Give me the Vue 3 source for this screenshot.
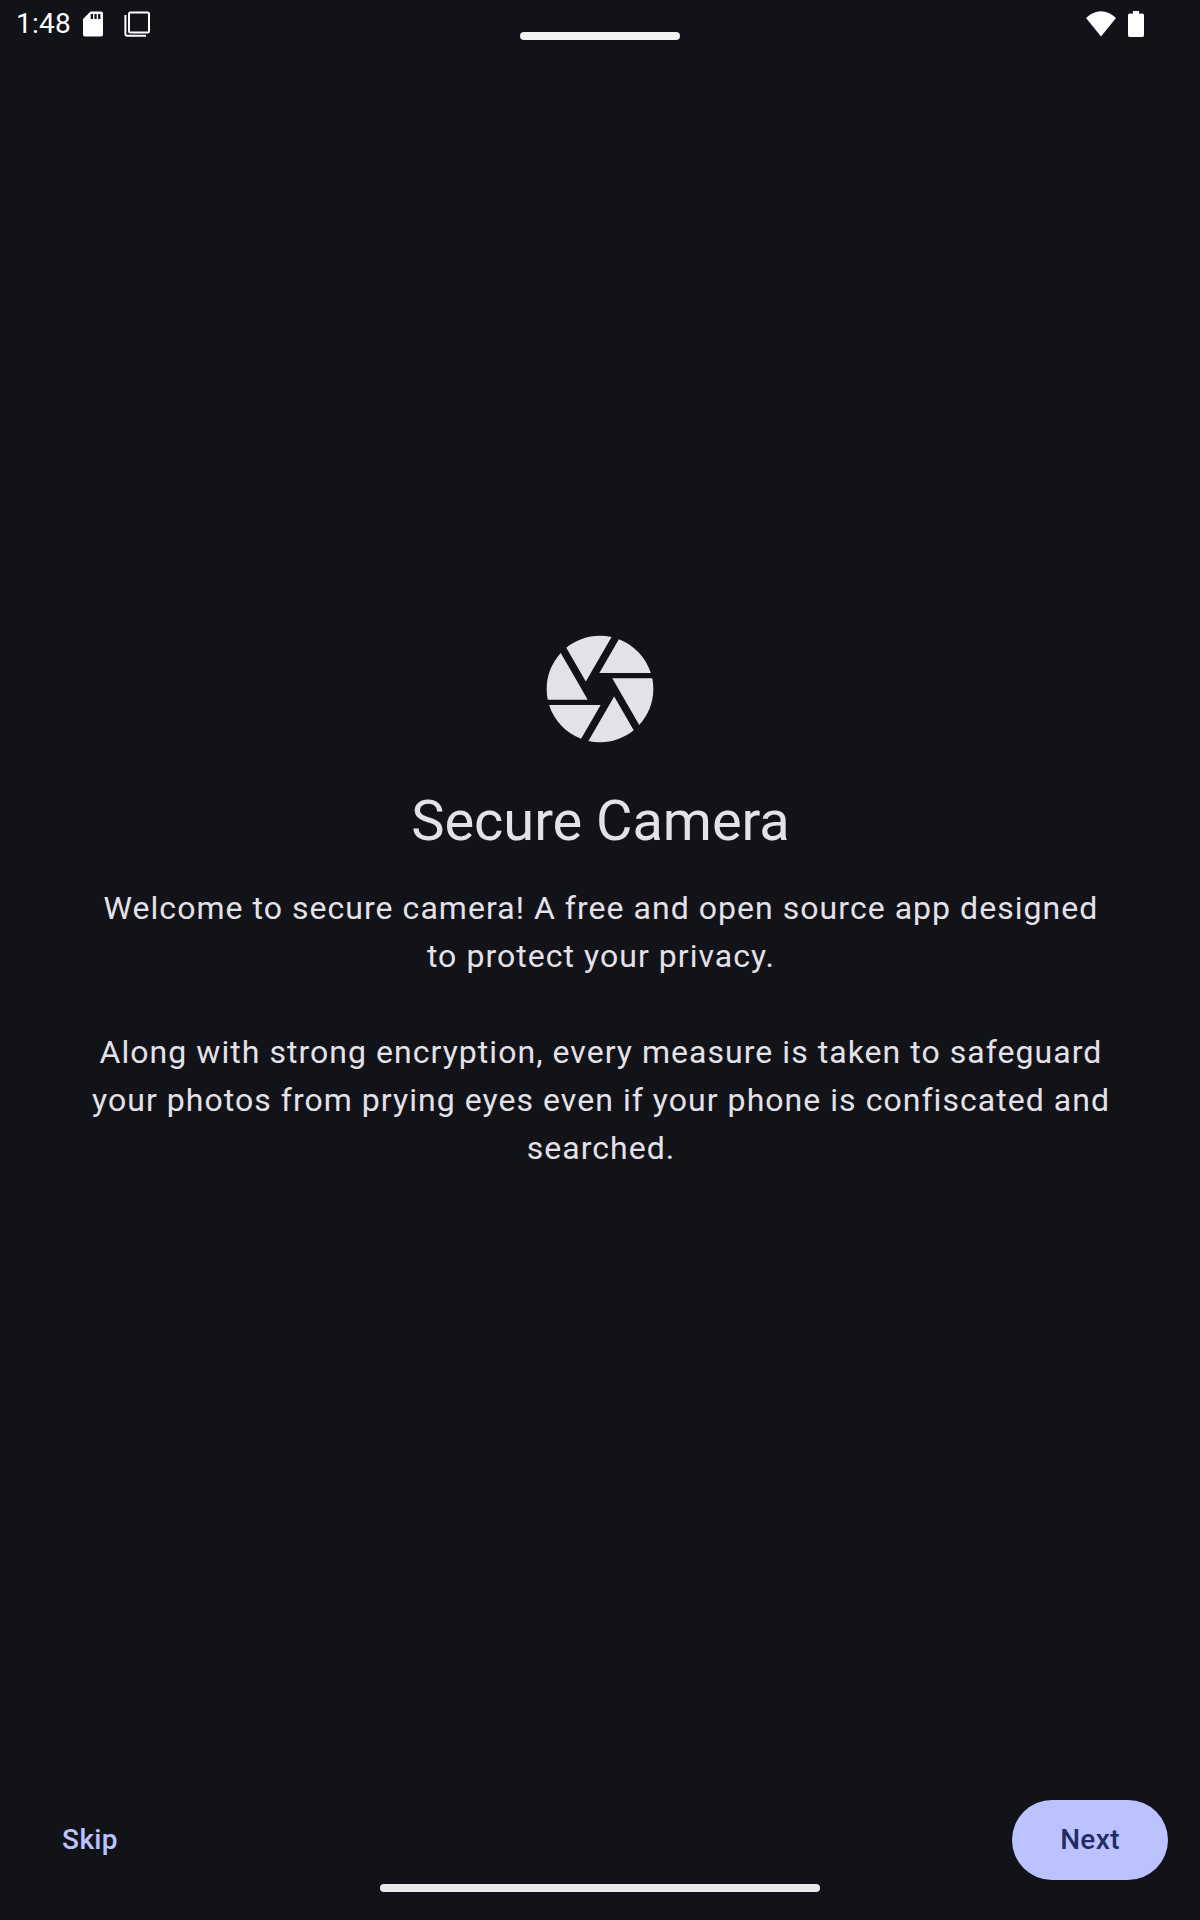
<script setup>
const intro = 'Welcome to secure camera! A free and open source app designed to protect your privacy.'
const details = 'Along with strong encryption, every measure is taken to safeguard your photos from prying eyes even if your phone is confiscated and searched.'
</script>

<template>
  <div class="screen">
    <header class="status">
      <span class="time">1:48</span>
      <svg class="sd" width="20" height="26" viewBox="0 0 20 26"><path fill="#fff" fill-rule="evenodd" d="M7.5 .5H18Q20 .5 20 2.5V23.5Q20 25.5 18 25.5H2Q0 25.5 0 23.5V8ZM7.7 3V8H10V3ZM11.4 3V8H13.7V3ZM15.1 3V8H17.4V3Z"/></svg>
      <svg class="copy" width="26" height="26" viewBox="0 0 26 26" fill="none" stroke="#fff" stroke-width="2"><rect x="5" y="1.5" width="20" height="20" rx="1.3"/><path d="M1.4 4V23.3Q1.4 24.7 2.8 24.7H22"/></svg>
      <span class="grow"></span>
      <svg class="wifi" width="30" height="26" viewBox="0 0 30 26"><path fill="#fff" d="M0 7Q7 .2 15 .2T30 7L15 25.5Z"/></svg>
      <svg class="battery" width="16" height="26" viewBox="0 0 16 26"><path fill="#fff" d="M5 0H11V2.5H14.3Q16 2.5 16 4.2V24.3Q16 26 14.3 26H1.7Q0 26 0 24.3V4.2Q0 2.5 1.7 2.5H5Z"/></svg>
    </header>
    <div class="handle"></div>
    <main>
      <svg class="logo" width="128" height="128" viewBox="0 0 24 24"><path fill="#e4e1e9" d="M9.4 10.5l4.77-8.26C13.47 2.09 12.75 2 12 2c-2.4 0-4.6.85-6.32 2.25l3.66 6.35.06-.1zM21.54 9c-.92-2.92-3.15-5.26-6-6.34L11.88 9h9.66zm.26 1h-7.49l.29.5 4.76 8.25C20.99 16.97 22 14.61 22 12c0-.69-.07-1.35-.2-2zM8.54 12l-3.9-6.75C3.01 7.03 2 9.39 2 12c0 .69.07 1.35.2 2h7.49l-1.15-2zm-6.08 3c.92 2.92 3.15 5.26 6 6.34L12.12 15H2.46zm11.27 0l-3.9 6.76c.7.15 1.42.24 2.17.24 2.4 0 4.6-.85 6.32-2.25l-3.66-6.35-.93 1.6z"/></svg>
      <h1>Secure Camera</h1>
      <p>{{ intro }}</p>
      <p>{{ details }}</p>
    </main>
    <footer>
      <button class="skip">Skip</button>
      <button class="next">Next</button>
    </footer>
    <div class="gesture"></div>
  </div>
</template>

<style>
body { background: #121318; }
</style>
<style scoped>
.screen { width: 1200px; height: 1920px; display: flex; flex-direction: column; background: #121318; color: #e4e1e9; font-family: Roboto, sans-serif; overflow: hidden; }
.status { height: 32px; padding: 0 56px 0 16px; display: flex; color: #fff; box-sizing: border-box; flex: none; }
.status svg { margin-top: 11px; overflow: visible; flex: none; }
.time { font-size: 28px; line-height: 48px; width: 67px; letter-spacing: .25px; }
.copy { margin-left: 21px; }
.grow { flex: 1; }
.battery { margin-left: 12px; }
.handle { width: 160px; height: 8px; border-radius: 4px; background: #eff2f1; align-self: center; flex: none; }
main { padding: 585px 86px 0; text-align: center; flex: 1; }
.logo { display: block; margin: 0 auto; }
h1 { font-size: 56px; line-height: 72px; font-weight: 400; margin: 32px 0 27px; padding-left: 1px; letter-spacing: -.05px; }
p { font-size: 32px; line-height: 48px; letter-spacing: 1.04px; margin: 0 0 48px; padding-left: 2px; }
footer { height: 80px; padding: 0 32px; display: flex; justify-content: space-between; flex: none; }
button { border: 0; padding: 0; border-radius: 40px; background: none; font: 500 28px/80px Roboto, sans-serif; letter-spacing: .35px; color: #bac3ff; height: 80px; }
.skip { width: 116px; }
.next { width: 156px; background: #bac3ff; color: #222c61; }
.gesture { width: 440px; height: 8px; border-radius: 4px; background: #ebebeb; align-self: center; margin: 4px 0 28px; flex: none; }
</style>
